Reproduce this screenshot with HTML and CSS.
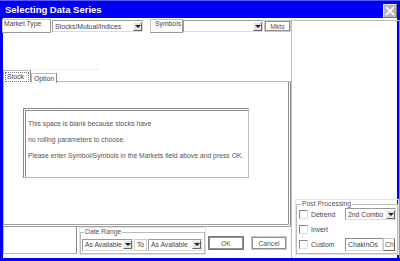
FILE: index.html
```html
<!DOCTYPE html>
<html lang="en">
<head>
<meta charset="UTF-8" />
<title>Selecting Data Series</title>
<link rel="stylesheet" href="styles.css">
</head>
<body>

<div class="window">
  <div class="titlebar">
    <span class="title">Selecting Data Series</span>
    <span class="close-btn">
      <svg viewBox="0 0 12 12" width="12" height="12"><path d="M2 2 L10 10 M10 2 L2 10" stroke="#fff" stroke-width="1.6" /></svg>
    </span>
  </div>

  <div class="client">
    <!-- Left part: selectors, tabs, bottom buttons -->
    <div class="left">
      <div class="top-row">
        <div class="lbl lbl-market">Market Type</div>
        <div class="combo combo-market"><span>Stocks/Mutual/Indices</span><i class="drop"></i></div>
        <div class="lbl lbl-symbols">Symbols</div>
        <div class="combo combo-symbols"><span></span><i class="drop"></i></div>
        <div class="btn btn-mkts">Mkts</div>
      </div>

      <div class="ghost-line"></div>

      <div class="tabs">
        <div class="tab tab-active"><span>Stock</span></div>
        <div class="tab">Option</div>
        <div class="tab-rest"></div>
      </div>

      <div class="tab-panel">
        <div class="msg-box">
          <p>This space is blank because stocks have</p>
          <p>no rolling parameters to choose.</p>
          <p>Please enter Symbol/Symbols in the Markets field above and press OK.</p>
        </div>
      </div>

      <div class="bottom-row">
        <div class="blank-box"></div>
        <fieldset class="group date-range">
          <legend>Date Range</legend>
          <div class="combo combo-date"><span>As Available</span><i class="drop"></i></div>
          <span class="to">To</span>
          <div class="combo combo-date2"><span>As Available</span><i class="drop"></i></div>
        </fieldset>
        <div class="btn btn-ok">OK</div>
        <div class="btn btn-cancel">Cancel</div>
      </div>
    </div>

    <!-- Right part: post processing -->
    <div class="right">
      <fieldset class="group post">
        <legend>Post Processing</legend>
        <div class="pp-row">
          <label class="check"><i class="box"></i>Detrend</label>
          <div class="combo combo-2nd"><span>2nd Combo</span><i class="drop"></i></div>
        </div>
        <div class="pp-row">
          <label class="check"><i class="box"></i>Invert</label>
        </div>
        <div class="pp-row">
          <label class="check"><i class="box"></i>Custom</label>
          <div class="edit-chaikin">ChakinOs</div>
          <div class="btn btn-ch">Ch</div>
        </div>
      </fieldset>
    </div>
  </div>
</div>

</body>
</html>
```

FILE: styles.css
```css
* {
  box-sizing: border-box;
}
body {
  margin: 0;
  font-family: 'Liberation Sans', Arial, sans-serif;
  font-size: 6.8px;
  color: #444;
}
.window {
  width: 400px;
  height: 261px;
  background: #0000f6;
  display: flex;
  flex-direction: column;
  border-top: 1px solid #5a5aff;
}
.titlebar {
  height: 17px;
  display: flex;
  align-items: center;
  justify-content: space-between;
  padding: 0 3px 0 5px;
}
.title {
  color: #fff;
  font-weight: 700;
  font-size: 9.5px;
  margin-top: -1px;
}
.close-btn {
  width: 14px;
  height: 14px;
  margin-top: 2px;
  background: #b8b8b8;
  border: 1px solid #e6e6e6;
  border-right-color: #777;
  border-bottom-color: #777;
  display: flex;
  align-items: center;
  justify-content: center;
}
.client {
  flex: 1;
  margin: 0 3px 3px;
  background: #fff;
  display: flex;
}

/* left column */
.left {
  width: 288px;
  display: flex;
  flex-direction: column;
}
.top-row {
  display: flex;
  margin-top: 1px;
  height: 14px;
  align-items: flex-start;
}
.lbl {
  height: 14px;
  border: 1px solid #c4c4c4;
  border-right-color: #999;
  border-bottom-color: #999;
  padding: 0 1px;
  line-height: 8px;
  white-space: nowrap;
}
.lbl-market {
  width: 49px;
  margin-left: -1px;
}
.lbl-symbols {
  width: 33px;
  margin-left: 7px;
  padding-left: 4px;
}
.combo {
  height: 12px;
  border: 1px solid #9a9a9a;
  border-right-color: #ddd;
  border-bottom-color: #ddd;
  display: flex;
  align-items: center;
  justify-content: space-between;
  padding-left: 2px;
  background: #fff;
  white-space: nowrap;
  overflow: hidden;
}
.drop {
  width: 9px;
  height: 9px;
  flex: none;
  background: #e4e4e4;
  border: 1px solid #f4f4f4;
  border-right-color: #666;
  border-bottom-color: #666;
  position: relative;
}
.drop::after {
  content: "";
  position: absolute;
  left: 1px;
  top: 2px;
  border-left: 3px solid transparent;
  border-right: 3px solid transparent;
  border-top: 3px solid #222;
}
.combo-market {
  width: 91px;
  margin-left: 1px;
  margin-top: 1px;
}
.combo-symbols {
  width: 80px;
  margin-top: 1px;
}
.btn {
  border: 1px solid #c8c8c8;
  outline: 1px solid #909090;
  outline-offset: -2px;
  display: flex;
  align-items: center;
  justify-content: center;
  background: #fff;
  color: #555;
}
.btn-mkts {
  width: 27px;
  height: 12px;
  margin-left: 1px;
  margin-top: 1px;
}
.ghost-line {
  height: 1px;
  margin: 36px 0 0 27px;
  width: 70px;
  background: #eee;
}

/* tabs */
.tabs {
  display: flex;
  align-items: flex-end;
  height: 12px;
}
.tab {
  width: 26px;
  height: 10px;
  border: 1px solid #bbb;
  border-bottom: none;
  border-right-color: #888;
  line-height: 9px;
  padding-left: 2px;
  margin-bottom: -1px;
  background: #fff;
}
.tab-active {
  width: 28px;
  height: 12px;
  padding: 1px;
  margin-bottom: 0;
  z-index: 1;
}
.tab-active span {
  display: block;
  border: 1px dotted #777;
  line-height: 8px;
  padding-left: 1px;
}
.tab-rest {
  flex: 1;
  border-bottom: 1px solid #bbb;
  margin-right: -1px;
}
.tab-panel {
  height: 145px;
  border: 1px solid #bbb;
  border-top: none;
  border-right: 3px double #8c8c8c;
  border-bottom: 3px double #a0a0a0;
  padding: 26px 0 0 19px;
}
.msg-box {
  width: 226px;
  height: 70px;
  border: 1px solid #bdbdbd;
  border-top: 3px double #8a8a8a;
  border-left: 3px double #8a8a8a;
  padding: 5px 0 0 2px;
  color: #555;
}
.msg-box p {
  margin: 0;
  line-height: 16px;
  white-space: nowrap;
}

/* bottom row */
.bottom-row {
  flex: 1;
  display: flex;
  align-items: flex-start;
}
.blank-box {
  width: 74px;
  height: 27px;
  border: 1px solid #bbb;
  border-right-color: #888;
  border-top: none;
}
.group {
  margin: 0;
  padding: 0;
  border: 1px solid #bbb;
  outline: 1px solid #e2e2e2;
}
.group legend {
  padding: 0 1px;
  margin-left: 2px;
  line-height: 8px;
  color: #555;
}
.date-range {
  width: 125px;
  height: 26px;
  margin: 1px 0 0 3px;
  display: flex;
  align-items: center;
  padding: 0 2px 0 1px;
}
.combo-date {
  width: 51px;
}
.to {
  width: 13px;
  text-align: center;
  border: 1px solid #ccc;
  line-height: 10px;
  margin: 0 1px;
}
.combo-date2 {
  width: 54px;
}
.btn-ok {
  width: 36px;
  height: 14px;
  margin: 9px 0 0 3px;
  border-color: #777;
}
.btn-cancel {
  width: 36px;
  height: 14px;
  margin: 9px 0 0 7px;
}

/* right column */
.right {
  flex: 1;
  margin-top: 2px;
  border-top: 1px solid #bbb;
  border-left: 1px solid #bbb;
  border-right: 1px solid #999;
  display: flex;
  flex-direction: column;
  justify-content: flex-end;
  padding: 0 1px 4px 4px;
}
.post {
  height: 54px;
  padding: 0 1px 0 2px;
  display: flex;
  flex-direction: column;
  gap: 3px;
}
.pp-row {
  display: flex;
  align-items: center;
  height: 12px;
}
.check {
  display: flex;
  align-items: center;
  width: 46px;
}
.box {
  width: 9px;
  height: 9px;
  border: 1px solid #888;
  border-right-color: #ddd;
  border-bottom-color: #ddd;
  margin-right: 3px;
  flex: none;
}
.combo-2nd {
  width: 51px;
}
.edit-chaikin {
  width: 38px;
  height: 13px;
  border: 1px solid #888;
  border-right-color: #ddd;
  border-bottom-color: #ddd;
  padding-left: 2px;
  line-height: 11px;
}
.btn-ch {
  width: 12px;
  height: 13px;
  justify-content: flex-start;
  padding-left: 1px;
  outline: none;
  border-right-color: #666;
  border-bottom-color: #666;
}
```
